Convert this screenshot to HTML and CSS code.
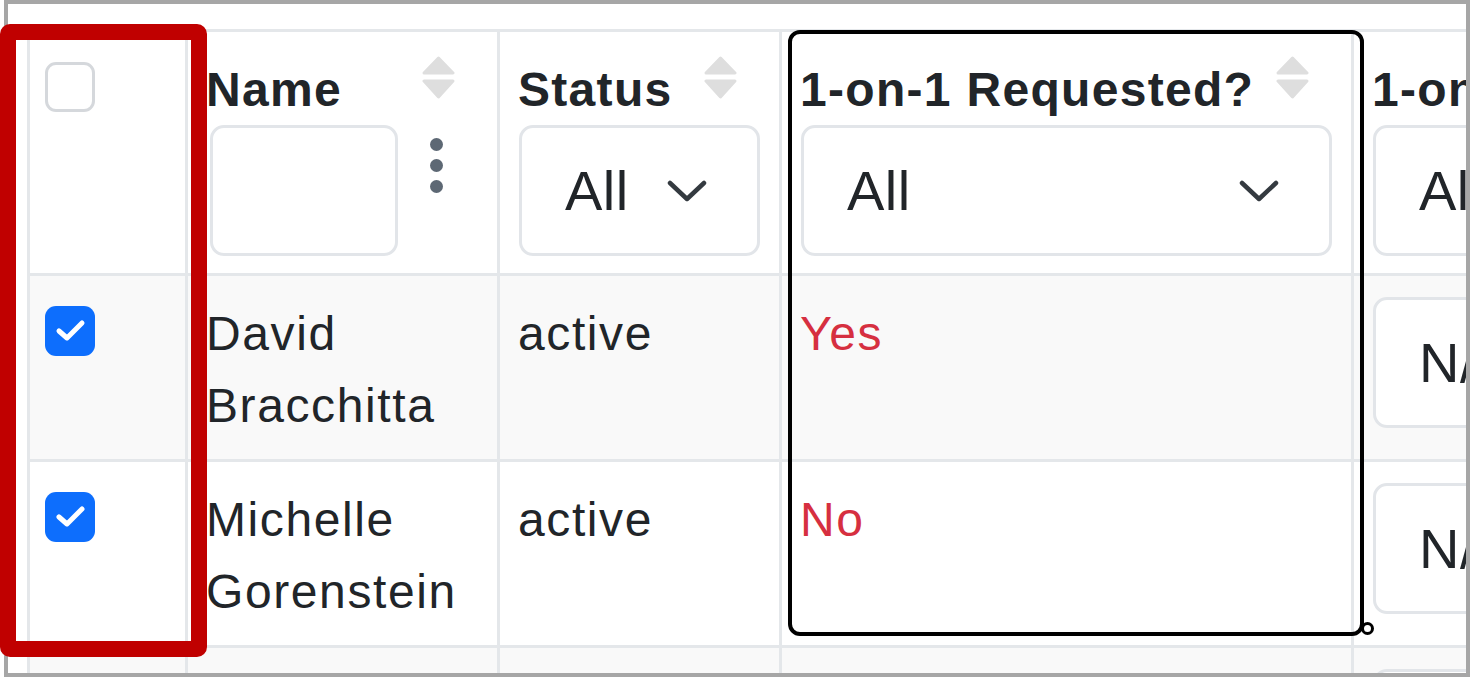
FILE: index.html
```html
<!DOCTYPE html>
<html lang="en">
<head>
<meta charset="utf-8">
<title>Table</title>
<link rel="stylesheet" href="styles.css">
</head>
<body>
<div class="frame">
  <div class="grid">
    <!-- header -->
    <div class="cell head"><span class="cb"></span></div>
    <div class="cell head">
      <div class="head-top">
        <span class="label">Name</span>
        <svg class="sort" width="33" height="45" viewBox="0 0 33 45"><path d="M16.5 3 L31 18 L2 18 Z M2 26 L31 26 L16.5 42 Z"/></svg>
      </div>
      <div class="head-filter">
        <span class="text-input"></span>
        <span class="kebab"><i></i><i></i><i></i></span>
      </div>
    </div>
    <div class="cell head">
      <div class="head-top">
        <span class="label">Status</span>
        <svg class="sort" width="33" height="45" viewBox="0 0 33 45"><path d="M16.5 3 L31 18 L2 18 Z M2 26 L31 26 L16.5 42 Z"/></svg>
      </div>
      <div class="select"><span>All</span><svg class="chev" width="40" height="22" viewBox="0 0 40 22"><path d="M3 3 L20 19 L37 3"/></svg></div>
    </div>
    <div class="cell head">
      <div class="head-top">
        <span class="label">1-on-1 Requested?</span>
        <svg class="sort" width="33" height="45" viewBox="0 0 33 45"><path d="M16.5 3 L31 18 L2 18 Z M2 26 L31 26 L16.5 42 Z"/></svg>
      </div>
      <div class="select"><span>All</span><svg class="chev" width="40" height="22" viewBox="0 0 40 22"><path d="M3 3 L20 19 L37 3"/></svg></div>
    </div>
    <div class="cell head last">
      <div class="head-top">
        <span class="label">1-on-1 Scheduled?</span>
      </div>
      <div class="select"><span>All</span><svg class="chev" width="40" height="22" viewBox="0 0 40 22"><path d="M3 3 L20 19 L37 3"/></svg></div>
    </div>

    <!-- row 1 -->
    <div class="cell odd"><span class="cb on"><svg width="50" height="50" viewBox="0 0 50 50"><path d="M14 25 L22 32 L37 17"/></svg></span></div>
    <div class="cell odd">David Bracchitta</div>
    <div class="cell odd">active</div>
    <div class="cell odd red">Yes</div>
    <div class="cell odd last"><div class="select"><span>N/A</span><svg class="chev" width="40" height="22" viewBox="0 0 40 22"><path d="M3 3 L20 19 L37 3"/></svg></div></div>

    <!-- row 2 -->
    <div class="cell"><span class="cb on"><svg width="50" height="50" viewBox="0 0 50 50"><path d="M14 25 L22 32 L37 17"/></svg></span></div>
    <div class="cell">Michelle Gorenstein</div>
    <div class="cell">active</div>
    <div class="cell red">No</div>
    <div class="cell last"><div class="select"><span>N/A</span><svg class="chev" width="40" height="22" viewBox="0 0 40 22"><path d="M3 3 L20 19 L37 3"/></svg></div></div>

    <!-- row 3 -->
    <div class="cell odd"><span class="cb"></span></div>
    <div class="cell odd">Sarah Lindqvist</div>
    <div class="cell odd">active</div>
    <div class="cell odd red">No</div>
    <div class="cell odd last"><div class="select"><span>N/A</span><svg class="chev" width="40" height="22" viewBox="0 0 40 22"><path d="M3 3 L20 19 L37 3"/></svg></div></div>
  </div>
</div>

<div class="mark-red"></div>
<div class="mark-black"></div>
<div class="mark-ring"></div>
</body>
</html>
```

FILE: styles.css
```css
html, body {
  margin: 0;
  padding: 0;
}
body {
  width: 1470px;
  height: 680px;
  overflow: hidden;
  position: relative;
  background: #ffffff;
  font-family: "Liberation Sans", Arial, sans-serif;
  color: #212529;
}

.frame {
  margin-left: 4px;
  width: 1466px;
  height: 677px;
  box-sizing: border-box;
  border: 4px solid #a6a6a6;
  padding: 25px 0 0 19px;
  overflow: hidden;
  background: #ffffff;
}

.grid {
  display: grid;
  grid-template-columns: 158px 312px 282px 572px 560px;
  width: max-content;
  border-top: 3px solid #e4e7ea;
  border-left: 3px solid #e4e7ea;
}

.cell {
  box-sizing: border-box;
  border-right: 3px solid #e4e7ea;
  border-bottom: 3px solid #e4e7ea;
  padding: 22px 16px 17px 18px;
  font-size: 48px;
  line-height: 72px;
  letter-spacing: 1.6px;
  background: #ffffff;
  min-width: 0;
}
.cell.odd {
  background: #f9f9f9;
}
.cell.last {
  overflow: hidden;
  white-space: nowrap;
}
.cell.red {
  color: #d62f40;
}

.head-top {
  display: flex;
  justify-content: space-between;
  align-items: flex-start;
  height: 72px;
}
.label {
  font-weight: bold;
  white-space: nowrap;
  letter-spacing: 1.3px;
}
.sort {
  margin-top: 1px;
  margin-right: 26px;
  flex: none;
}
.sort path {
  fill: #dedede;
  stroke: #dedede;
  stroke-width: 3;
  stroke-linejoin: round;
}

.head-filter {
  display: flex;
  align-items: flex-start;
}
.text-input {
  display: block;
  margin-left: 4px;
  margin-top: -1px;
  width: 188px;
  height: 131px;
  box-sizing: border-box;
  border: 3px solid #e2e5e9;
  border-radius: 14px;
  background: #ffffff;
}
.kebab {
  display: flex;
  flex-direction: column;
  gap: 8px;
  margin-left: 32px;
  margin-top: 12px;
}
.kebab i {
  display: block;
  width: 13px;
  height: 13px;
  border-radius: 50%;
  background: #5d6874;
}

.select {
  display: flex;
  align-items: center;
  justify-content: space-between;
  margin: -1px 3px 0 1px;
  height: 131px;
  box-sizing: border-box;
  border: 3px solid #e2e5e9;
  border-radius: 14px;
  background: #ffffff;
  padding: 0 50px 0 43px;
  font-size: 56px;
  line-height: 1;
  letter-spacing: 0.5px;
  color: #212529;
  font-weight: normal;
}
.last .select {
  width: 520px;
}
.chev path {
  fill: none;
  stroke: #343a40;
  stroke-width: 4.5;
  stroke-linecap: round;
  stroke-linejoin: round;
}

.cb {
  display: block;
  width: 50px;
  height: 50px;
  margin-top: 8px;
  margin-left: -3px;
  box-sizing: border-box;
  border: 3px solid #d5d8dc;
  border-radius: 11px;
  background: #ffffff;
}
.cb.on {
  border: none;
  background: #0d6efd;
}
.cb svg {
  display: block;
}
.cb svg path {
  fill: none;
  stroke: #ffffff;
  stroke-width: 5;
  stroke-linecap: round;
  stroke-linejoin: round;
}

/* annotations over the screenshot */
.mark-red {
  position: absolute;
  left: 0;
  top: 24px;
  width: 207px;
  height: 633px;
  box-sizing: border-box;
  border: 16px solid #c00000;
  border-radius: 10px;
}
.mark-black {
  position: absolute;
  left: 788px;
  top: 30px;
  width: 576px;
  height: 606px;
  box-sizing: border-box;
  border: 4px solid #000000;
  border-radius: 12px;
}
.mark-ring {
  position: absolute;
  left: 1361px;
  top: 622px;
  width: 13px;
  height: 13px;
  box-sizing: border-box;
  border: 3.5px solid #000000;
  border-radius: 50%;
  background: #ffffff;
}
```
